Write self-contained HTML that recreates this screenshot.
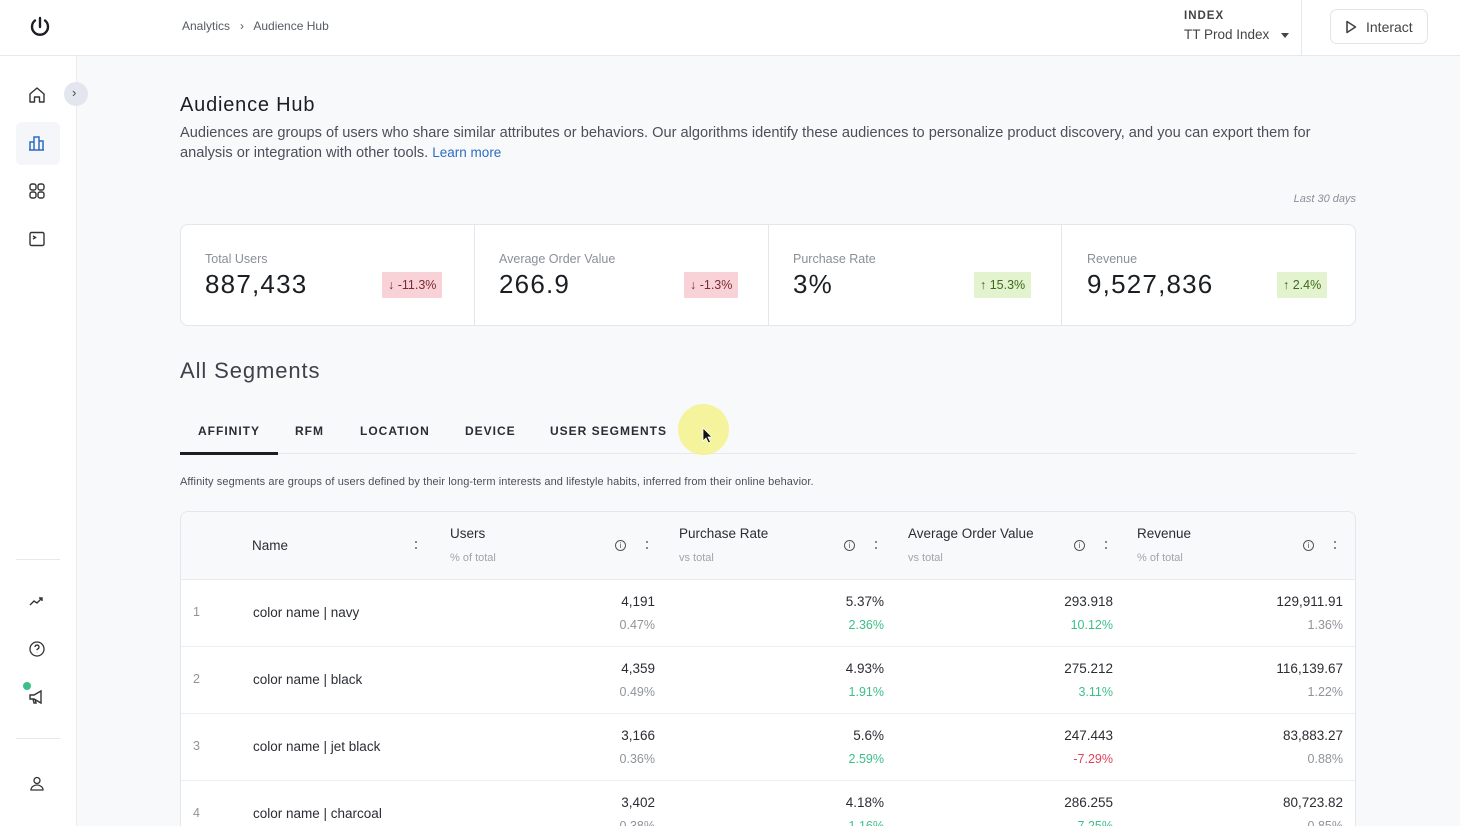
<!DOCTYPE html>
<html style="width:1460px;height:826px;overflow:hidden"><head><meta charset="utf-8"><style>
*{box-sizing:border-box;margin:0;padding:0}
body{width:1460px;height:826px;overflow:hidden;background:#f8f9fb;font-family:"Liberation Sans",sans-serif;color:#1f2328;position:relative}
.a{position:absolute}
.hdr{left:0;top:0;width:1460px;height:56px;background:#fff;border-bottom:1px solid #e6e8ec}
.side{left:0;top:56px;width:77px;height:770px;background:#fff;border-right:1px solid #e9ebef}
.ic{position:absolute;left:27px;width:20px;height:20px}
.card{background:#fff;border:1px solid #e3e6ea;border-radius:8px}
.lbl{font-size:12.5px;color:#8a8f98}
.big{font-size:26px;color:#1b1e23;letter-spacing:1.2px}
.badge{font-size:12.5px;height:26px;line-height:26px;padding:0 6px}
.neg{background:#f9d2d7;color:#7a2b35}
.pos{background:#e3f2cf;color:#3c6b1c}
.tab{font-size:12px;font-weight:bold;letter-spacing:1px;color:#2a2d33;top:424px}
.r{text-align:right}
.num{font-size:13.5px;color:#2a2d33}
.sub{font-size:12.5px;color:#8f949b}
.g{color:#3cbf8a}.rd{color:#e0435b}
.th{font-size:13.5px;color:#2a2d33}
.ths{font-size:11px;color:#a0a4aa}
.d{position:absolute;width:2px;height:2px;background:#666;border-radius:50%}
</style></head><body>
<div class="a hdr"></div>
<svg class="a" style="left:28px;top:15px" width="24" height="24" viewBox="0 0 24 24" fill="none" stroke="#1b1e23" stroke-width="2.4" stroke-linecap="round"><path d="M7 5.5A8 8 0 1 0 17 5.5"/><path d="M12 3v9"/></svg>
<div class="a" style="left:182px;top:19px;font-size:12px;color:#555b65">Analytics &nbsp;&nbsp;›&nbsp;&nbsp; Audience Hub</div>
<div class="a" style="left:1184px;top:10px;font-size:11.5px;font-weight:bold;letter-spacing:1px;color:#444">INDEX</div>
<div class="a" style="left:1184px;top:27px;font-size:13.5px;color:#444">TT Prod Index</div>
<div class="a" style="left:1281px;top:33px;width:0;height:0;border-left:4px solid transparent;border-right:4px solid transparent;border-top:5px solid #444"></div>
<div class="a" style="left:1301px;top:0;width:1px;height:56px;background:#e6e8ec"></div>
<div class="a" style="left:1330px;top:9px;width:98px;height:35px;border:1px solid #e2e4e8;border-radius:7px;background:#fff"></div>
<svg class="a" style="left:1345px;top:20px" width="12" height="14" viewBox="0 0 12 14"><path d="M2 1.5L10.5 7 2 12.5z" fill="none" stroke="#444" stroke-width="1.6" stroke-linejoin="round"/></svg>
<div class="a" style="left:1366px;top:19px;font-size:14px;color:#444">Interact</div>

<div class="a side"></div>
<div class="a" style="left:16px;top:122px;width:44px;height:43px;background:#f4f6f9;border-radius:6px"></div>
<svg class="ic" style="top:85px" viewBox="0 0 20 20" fill="none" stroke="#333" stroke-width="1.4" stroke-linejoin="round"><path d="M3 9L10 3l7 6v8h-4.5v-5h-5v5H3z"/></svg>
<svg class="ic" style="top:133px" viewBox="0 0 20 20" fill="none" stroke="#2d6cc0" stroke-width="1.5"><path d="M3 17V9h4v8M7 17V4h5v13M12 17V8h4v9M2 17h15"/></svg>
<svg class="ic" style="top:181px" viewBox="0 0 20 20" fill="none" stroke="#333" stroke-width="1.4"><rect x="3" y="3" width="6" height="6" rx="2"/><rect x="11" y="3" width="6" height="6" rx="2"/><rect x="3" y="11" width="6" height="6" rx="2"/><rect x="11" y="11" width="6" height="6" rx="2"/></svg>
<svg class="ic" style="top:229px" viewBox="0 0 20 20" fill="none" stroke="#333" stroke-width="1.4"><rect x="3" y="3.5" width="14" height="13" rx="1.5"/><path d="M6 7l2.5 1.5L6 10"/></svg>
<div class="a" style="left:64px;top:82px;width:24px;height:24px;border-radius:50%;background:#e3e6ee"></div>
<div class="a" style="left:72px;top:85px;font-size:13px;color:#444">›</div>
<div class="a" style="left:16px;top:559px;width:44px;height:1px;background:#e6e8ec"></div>
<svg class="ic" style="top:591px" viewBox="0 0 20 20" fill="none" stroke="#333" stroke-width="1.4"><path d="M3 14l4-4 3 2 5-5M12 7h3v3"/></svg>
<svg class="ic" style="top:639px" viewBox="0 0 20 20" fill="none" stroke="#333" stroke-width="1.3"><circle cx="10" cy="10" r="7"/><path d="M8 8a2 2 0 1 1 2.5 2c-.5.2-.5.7-.5 1.2M10 13.5v.3"/></svg>
<div class="a" style="left:23px;top:682px;width:8px;height:8px;border-radius:50%;background:#3cbf8a"></div>
<svg class="ic" style="top:687px" viewBox="0 0 20 20" fill="none" stroke="#333" stroke-width="1.4"><path d="M3 8h4l7-4v12l-7-4H3zM6 12l1 4h2l-1-4"/></svg>
<div class="a" style="left:16px;top:738px;width:44px;height:1px;background:#e6e8ec"></div>
<svg class="ic" style="top:774px" viewBox="0 0 20 20" fill="none" stroke="#333" stroke-width="1.3"><circle cx="10" cy="6.5" r="3"/><path d="M4 16c0-3 3-5 6-5s6 2 6 5z"/></svg>

<div class="a" style="left:180px;top:94px;font-size:20px;letter-spacing:.8px;color:#1b1e23">Audience Hub</div>
<div class="a" style="left:180px;top:123px;width:1170px;font-size:14.6px;line-height:20px;color:#4a4f58">Audiences are groups of users who share similar attributes or behaviors. Our algorithms identify these audiences to personalize product discovery, and you can export them for analysis or integration with other tools. <span style="color:#2d6cc0;font-size:13.5px">Learn more</span></div>
<div class="a" style="left:1240px;top:193px;width:116px;text-align:right;font-size:11px;font-style:italic;color:#8a8f98">Last 30 days</div>

<div class="a card" style="left:180px;top:224px;width:1176px;height:102px"></div>
<div class="a" style="left:474px;top:225px;width:1px;height:100px;background:#e3e6ea"></div>
<div class="a" style="left:768px;top:225px;width:1px;height:100px;background:#e3e6ea"></div>
<div class="a" style="left:1061px;top:225px;width:1px;height:100px;background:#e3e6ea"></div>
<div class="a lbl" style="left:205px;top:252px">Total Users</div><div class="a big" style="left:205px;top:269px">887,433</div><div class="a badge neg" style="left:382px;top:272px">↓ -11.3%</div>
<div class="a lbl" style="left:499px;top:252px">Average Order Value</div><div class="a big" style="left:499px;top:269px">266.9</div><div class="a badge neg" style="left:684px;top:272px">↓ -1.3%</div>
<div class="a lbl" style="left:793px;top:252px">Purchase Rate</div><div class="a big" style="left:793px;top:269px">3%</div><div class="a badge pos" style="left:974px;top:272px">↑ 15.3%</div>
<div class="a lbl" style="left:1087px;top:252px">Revenue</div><div class="a big" style="left:1087px;top:269px">9,527,836</div><div class="a badge pos" style="left:1277px;top:272px">↑ 2.4%</div>

<div class="a" style="left:180px;top:358px;font-size:22px;letter-spacing:.9px;color:#3d424a">All Segments</div>
<div class="a tab" style="left:198px">AFFINITY</div>
<div class="a tab" style="left:295px">RFM</div>
<div class="a tab" style="left:360px">LOCATION</div>
<div class="a tab" style="left:465px">DEVICE</div>
<div class="a tab" style="left:550px">USER SEGMENTS</div>
<div class="a" style="left:180px;top:453px;width:1176px;height:1px;background:#e6e8ec"></div>
<div class="a" style="left:180px;top:452px;width:98px;height:3px;background:#1b1e23"></div>
<div class="a" style="left:678px;top:404px;width:51px;height:51px;border-radius:50%;background:#f4f28a;opacity:.85"></div>
<svg class="a" style="left:702px;top:427px" width="12" height="18" viewBox="0 0 12 18"><path d="M1 1v13l3-3 2.5 5 2-1-2.5-5h4z" fill="#111" stroke="#fff" stroke-width=".8"/></svg>
<div class="a" style="left:180px;top:476px;font-size:11px;color:#4a4f58;letter-spacing:.1px">Affinity segments are groups of users defined by their long-term interests and lifestyle habits, inferred from their online behavior.</div>

<div class="a" style="left:180px;top:511px;width:1176px;height:330px;background:#fff;border:1px solid #e3e6ea;border-radius:8px;overflow:hidden">
<div style="height:68px;background:#f8f9fa;border-bottom:1px solid #e8eaed"></div>
</div>
<div class="a th" style="left:252px;top:538px">Name</div>
<div class="a th" style="left:450px;top:526px">Users</div><div class="a ths" style="left:450px;top:552px">% of total</div>
<div class="a th" style="left:679px;top:526px">Purchase Rate</div><div class="a ths" style="left:679px;top:552px">vs total</div>
<div class="a th" style="left:908px;top:526px">Average Order Value</div><div class="a ths" style="left:908px;top:552px">vs total</div>
<div class="a th" style="left:1137px;top:526px">Revenue</div><div class="a ths" style="left:1137px;top:552px">% of total</div>
<div class="d" style="left:415px;top:541px"></div><div class="d" style="left:415px;top:547px"></div>
<div class="d" style="left:646px;top:541px"></div><div class="d" style="left:646px;top:547px"></div>
<div class="d" style="left:875px;top:541px"></div><div class="d" style="left:875px;top:547px"></div>
<div class="d" style="left:1105px;top:541px"></div><div class="d" style="left:1105px;top:547px"></div>
<div class="d" style="left:1334px;top:541px"></div><div class="d" style="left:1334px;top:547px"></div>
<div class="a" style="left:615px;top:540px;width:11px;height:11px;border:1px solid #555;border-radius:50%;font-size:8px;line-height:9px;text-align:center;color:#555">i</div>
<div class="a" style="left:844px;top:540px;width:11px;height:11px;border:1px solid #555;border-radius:50%;font-size:8px;line-height:9px;text-align:center;color:#555">i</div>
<div class="a" style="left:1074px;top:540px;width:11px;height:11px;border:1px solid #555;border-radius:50%;font-size:8px;line-height:9px;text-align:center;color:#555">i</div>
<div class="a" style="left:1303px;top:540px;width:11px;height:11px;border:1px solid #555;border-radius:50%;font-size:8px;line-height:9px;text-align:center;color:#555">i</div>

<div class="a" style="left:181px;top:646px;width:1174px;height:1px;background:#eceef1"></div>
<div class="a" style="left:181px;top:713px;width:1174px;height:1px;background:#eceef1"></div>
<div class="a" style="left:181px;top:780px;width:1174px;height:1px;background:#eceef1"></div>

<div class="a sub" style="left:193px;top:605px">1</div><div class="a num" style="left:253px;top:605px">color name | navy</div>
<div class="a num r" style="left:555px;top:594px;width:100px">4,191</div><div class="a sub r" style="left:555px;top:618px;width:100px">0.47%</div>
<div class="a num r" style="left:784px;top:594px;width:100px">5.37%</div><div class="a sub r g" style="left:784px;top:618px;width:100px">2.36%</div>
<div class="a num r" style="left:1013px;top:594px;width:100px">293.918</div><div class="a sub r g" style="left:1013px;top:618px;width:100px">10.12%</div>
<div class="a num r" style="left:1203px;top:594px;width:140px">129,911.91</div><div class="a sub r" style="left:1243px;top:618px;width:100px">1.36%</div>

<div class="a sub" style="left:193px;top:672px">2</div><div class="a num" style="left:253px;top:672px">color name | black</div>
<div class="a num r" style="left:555px;top:661px;width:100px">4,359</div><div class="a sub r" style="left:555px;top:685px;width:100px">0.49%</div>
<div class="a num r" style="left:784px;top:661px;width:100px">4.93%</div><div class="a sub r g" style="left:784px;top:685px;width:100px">1.91%</div>
<div class="a num r" style="left:1013px;top:661px;width:100px">275.212</div><div class="a sub r g" style="left:1013px;top:685px;width:100px">3.11%</div>
<div class="a num r" style="left:1203px;top:661px;width:140px">116,139.67</div><div class="a sub r" style="left:1243px;top:685px;width:100px">1.22%</div>

<div class="a sub" style="left:193px;top:739px">3</div><div class="a num" style="left:253px;top:739px">color name | jet black</div>
<div class="a num r" style="left:555px;top:728px;width:100px">3,166</div><div class="a sub r" style="left:555px;top:752px;width:100px">0.36%</div>
<div class="a num r" style="left:784px;top:728px;width:100px">5.6%</div><div class="a sub r g" style="left:784px;top:752px;width:100px">2.59%</div>
<div class="a num r" style="left:1013px;top:728px;width:100px">247.443</div><div class="a sub r rd" style="left:1013px;top:752px;width:100px">-7.29%</div>
<div class="a num r" style="left:1203px;top:728px;width:140px">83,883.27</div><div class="a sub r" style="left:1243px;top:752px;width:100px">0.88%</div>

<div class="a sub" style="left:193px;top:806px">4</div><div class="a num" style="left:253px;top:806px">color name | charcoal</div>
<div class="a num r" style="left:555px;top:795px;width:100px">3,402</div><div class="a sub r" style="left:555px;top:819px;width:100px">0.38%</div>
<div class="a num r" style="left:784px;top:795px;width:100px">4.18%</div><div class="a sub r g" style="left:784px;top:819px;width:100px">1.16%</div>
<div class="a num r" style="left:1013px;top:795px;width:100px">286.255</div><div class="a sub r g" style="left:1013px;top:819px;width:100px">7.25%</div>
<div class="a num r" style="left:1203px;top:795px;width:140px">80,723.82</div><div class="a sub r" style="left:1243px;top:819px;width:100px">0.85%</div>
</body></html>
